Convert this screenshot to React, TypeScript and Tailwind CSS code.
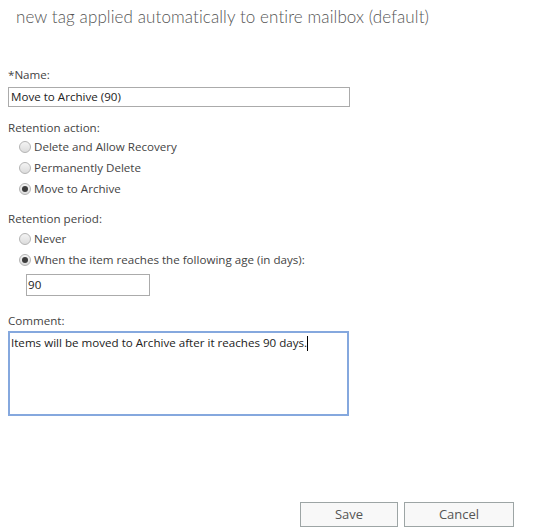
import React from 'react';

function Radio({ label, checked }: { label: string; checked?: boolean }) {
    return (
        <label className="flex items-center h-[21px] pl-[11px] gap-[3px]">
            <span className="w-[12px] h-[12px] rounded-full border border-[#b4b4b4] bg-gradient-to-b from-[#f4f4f4] to-[#dcdcdc] flex items-center justify-center">
                {checked && <span className="w-[6px] h-[6px] rounded-full bg-[#3c3c3c]" />}
            </span>
            <span>{label}</span>
        </label>
    );
}

export default function App() {
    return (
        <div className="w-[541px] h-[531px] bg-white text-[#444] text-[11.6px] relative" style={{ fontFamily: '"Open Sans", "Noto Sans", sans-serif' }}>
            <h1 className="pl-[16px] pt-[4px] text-[17px] font-light text-[#555] leading-[26px] tracking-[0.1px]" style={{ fontFamily: 'Lato, "Open Sans", sans-serif' }}>
                new tag applied automatically to entire mailbox (default)
            </h1>

            <div className="pl-[8px] pt-[37px]">
                <div className="leading-[16px]">*Name:</div>
                <div className="mt-[4px] w-[342px] h-[20px] border border-[#ababab] px-[2px] text-[#222] leading-[18px]">
                    Move to Archive (90)
                </div>

                <div className="mt-[13px] leading-[16px]">Retention action:</div>
                <div>
                    <Radio label="Delete and Allow Recovery" />
                    <Radio label="Permanently Delete" />
                    <Radio label="Move to Archive" checked />
                </div>

                <div className="mt-[12px] leading-[16px]">Retention period:</div>
                <div className="mt-[1px]">
                    <Radio label="Never" />
                    <Radio label="When the item reaches the following age (in days):" checked />
                </div>
                <div className="ml-[18px] mt-[4px] w-[124px] h-[22px] border border-[#ababab] px-[1px] text-[#222] leading-[20px]">
                    90
                </div>

                <div className="mt-[17px] leading-[16px]">Comment:</div>
                <div className="mt-[2px] w-[341px] h-[85px] border-2 border-[#85a8de] px-[1px] pt-[2px] text-[#222] leading-[16px]">
                    Items will be moved to Archive after it reaches 90 days.<span className="inline-block w-px h-[15px] bg-black align-middle" />
                </div>
            </div>

            <div className="absolute left-[300px] top-[502px] flex gap-[6px]">
                <button className="w-[98px] h-[25px] border border-[#9da5a5] bg-[#f8f8f8] text-[#555] text-[13px]">Save</button>
                <button className="w-[110px] h-[25px] border border-[#9da5a5] bg-[#f8f8f8] text-[#555] text-[13px]">Cancel</button>
            </div>
        </div>
    );
}
